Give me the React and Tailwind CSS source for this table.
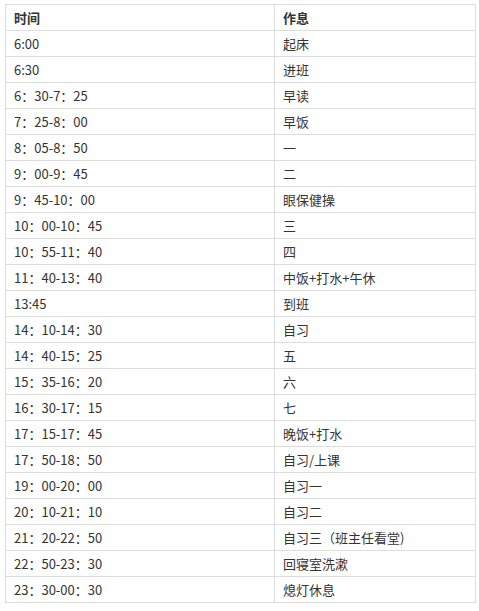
import React from "react";

const rows = [
  ["6:00", "起床"],
  ["6:30", "进班"],
  ["6：30-7：25", "早读"],
  ["7：25-8：00", "早饭"],
  ["8：05-8：50", "一"],
  ["9：00-9：45", "二"],
  ["9：45-10：00", "眼保健操"],
  ["10：00-10：45", "三"],
  ["10：55-11：40", "四"],
  ["11：40-13：40", "中饭+打水+午休"],
  ["13:45", "到班"],
  ["14：10-14：30", "自习"],
  ["14：40-15：25", "五"],
  ["15：35-16：20", "六"],
  ["16：30-17：15", "七"],
  ["17：15-17：45", "晚饭+打水"],
  ["17：50-18：50", "自习/上课"],
  ["19：00-20：00", "自习一"],
  ["20：10-21：10", "自习二"],
  ["21：20-22：50", "自习三（班主任看堂)"],
  ["22：50-23：30", "回寝室洗漱"],
  ["23：30-00：30", "熄灯休息"],
];

export default function App() {
  return (
    <div
      className="w-[479px] h-[611px] bg-white pt-[4px] pl-[5px]"
      style={{ fontFamily: '"Microsoft YaHei", "Noto Sans CJK SC", sans-serif' }}
    >
      <table className="border-collapse w-[471px] table-fixed text-[13px] leading-[17px] text-[#333]">
        <colgroup>
          <col className="w-[269px]" />
          <col />
        </colgroup>
        <thead>
          <tr>
            <th className="border border-[#ddd] px-[8px] py-[4px] text-left font-bold">时间</th>
            <th className="border border-[#ddd] px-[8px] py-[4px] text-left font-bold">作息</th>
          </tr>
        </thead>
        <tbody>
          {rows.map(([t, a], i) => (
            <tr key={i}>
              <td className="border border-[#ddd] px-[8px] py-[4px] whitespace-nowrap">{t}</td>
              <td className="border border-[#ddd] px-[8px] py-[4px] whitespace-nowrap">{a}</td>
            </tr>
          ))}
        </tbody>
      </table>
    </div>
  );
}
